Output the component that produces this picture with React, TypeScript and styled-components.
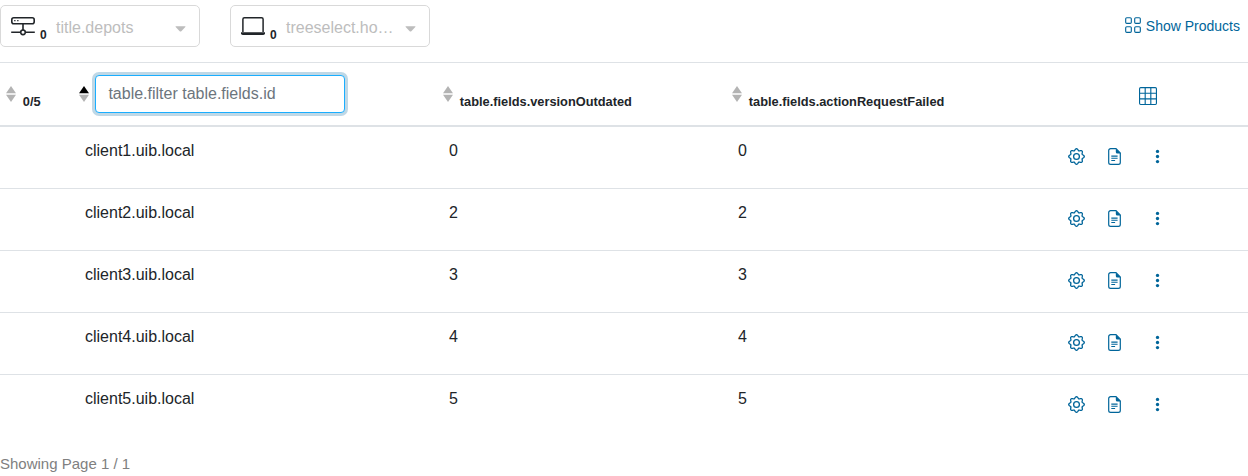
import React from 'react';
import styled, { createGlobalStyle } from 'styled-components';
import { BsGrid, BsGrid3X3 } from 'react-icons/bs';

const GlobalStyle = createGlobalStyle`
  * { box-sizing: border-box; }
  body {
    margin: 0;
    background: #fff;
    color: #212529;
    font: 16px/24px "Liberation Sans", Arial, sans-serif;
  }
`;

const Page = styled.main`
  width: 1248px;
  height: 476px;
  overflow: hidden;
`;

const Toolbar = styled.header`
  display: flex;
  align-items: flex-start;
  gap: 30px;
  height: 62px;
  padding: 5px 8px 0 0;
`;

const Select = styled.div`
  display: flex;
  align-items: center;
  width: 200px;
  height: 42px;
  padding: 0 13px 0 10px;
  border: 1px solid #d9d9d9;
  border-radius: 5px;
`;

const SelectIcon = styled.span`
  display: flex;
  width: 24px;
  height: 24px;
  margin-top: 2px;
`;

const Count = styled.span`
  width: 7px;
  margin: 17px 9px 0 5px;
  font-size: 12px;
  font-weight: 700;
`;

const SelectLabel = styled.span`
  flex: 1;
  padding-top: 3px;
  color: #bdbdbd;
`;

const Caret = styled.svg`
  width: 11px;
  height: 6px;
  margin-top: 5px;
  fill: #bdbdbd;
`;

const LinkButton = styled.button`
  display: flex;
  align-items: center;
  gap: 4px;
  margin: 9px 0 0 auto;
  padding: 0;
  border: 0;
  background: none;
  color: #00659a;
  font: 14px/24px "Liberation Sans", Arial, sans-serif;
  svg { margin-top: -2px; }
`;

const columns = '73px 364px 289px 330px 1fr';

const HeadRow = styled.div`
  display: grid;
  grid-template-columns: ${columns};
  height: 65px;
  border-top: 1px solid #dee2e6;
  border-bottom: 2px solid #dee2e6;
`;

const HeadCell = styled.div`
  display: flex;
  align-items: flex-start;
  padding: 12px 0 0 6px;
`;

const SortIcon = styled.svg`
  flex: none;
  width: 10px;
  height: 16px;
  margin-top: 11px;
`;

const HeadLabel = styled.span`
  margin: 15px 0 0 6.8px;
  font-size: 12.8px;
  font-weight: 700;
`;

const Filter = styled.input`
  width: 250px;
  height: 38px;
  margin-left: 6px;
  padding: 6px 12.4px;
  border: 1px solid #1aaeff;
  border-radius: 4px;
  outline: 0;
  box-shadow: 0 0 0 3px rgba(0, 101, 154, 0.25);
  color: #495057;
  font: inherit;
  &::placeholder { color: #6c757d; opacity: 1; }
`;

const TableButton = styled.div`
  padding: 24px 0 0 83px;
  color: #00659a;
  line-height: 0;
`;

const Row = styled.div`
  display: grid;
  grid-template-columns: ${columns};
  height: 62px;
  border-bottom: 1px solid #dee2e6;
  &:last-child { border-bottom: 0; }
`;

const Cell = styled.div`
  padding: 12px;
`;

const Actions = styled.div`
  display: flex;
  align-items: flex-start;
  padding: 21px 0 0 12px;
  color: #00659a;
`;

const ActionIcon = styled.span<{ $width: number }>`
  display: flex;
  width: ${(p) => p.$width}px;
`;

const Footer = styled.footer`
  padding-top: 15px;
  color: #808080;
  font-size: 15px;
`;

function Sort({ active = false }: { active?: boolean }) {
  return (
    <SortIcon viewBox="0 0 10 16">
      <path d="M0 7.2 5 0l5 7.2z" fill={active ? '#000' : '#b3b3b3'} />
      <path d="M0 8.8h10L5 16z" fill="#b3b3b3" />
    </SortIcon>
  );
}

function NetworkIcon() {
  return (
    <svg width="24" height="24" fill="none" stroke="currentColor" strokeWidth="1.6">
      <rect x="0.8" y="2.8" width="22.4" height="6" rx="2" />
      <path d="M12 9v6M0.2 17.3h9.2M14.6 17.3h9.2" />
      <circle cx="12" cy="17.3" r="2.3" />
      <path d="M3.2 5.7h1.3M6.2 5.7h1.3" strokeWidth="1.3" />
    </svg>
  );
}

function LaptopIcon() {
  return (
    <svg width="24" height="24" fill="none" stroke="currentColor" strokeWidth="1.5">
      <path d="M1.9 17V4.3a1.5 1.5 0 0 1 1.5-1.5h17.2a1.5 1.5 0 0 1 1.5 1.5V17" />
      <path d="M0 17.2h24v1a1.8 1.8 0 0 1-1.8 1.8H1.8A1.8 1.8 0 0 1 0 18.2z" fill="currentColor" stroke="none" />
    </svg>
  );
}

// Eight rounded teeth: the radius swings once per tooth.
const gearOutline = Array.from({ length: 96 }, (_, i) => {
  const angle = (i / 96) * Math.PI * 2;
  const radius = 6.95 + 0.85 * Math.cos(8 * angle);
  return `${(8.5 + radius * Math.cos(angle)).toFixed(2)},${(8.5 + radius * Math.sin(angle)).toFixed(2)}`;
}).join(' ');

function GearIcon() {
  return (
    <svg width="17" height="17" fill="none" stroke="currentColor" strokeWidth="1.3">
      <polygon points={gearOutline} strokeLinejoin="round" />
      <circle cx="8.5" cy="8.5" r="2.9" />
    </svg>
  );
}

function FileIcon() {
  return (
    <svg width="17" height="17" viewBox="0 0 17 17" fill="none" stroke="currentColor" strokeWidth="1.2">
      <path d="M10 .7H4.6a1.9 1.9 0 0 0-1.9 1.9v11.8a1.9 1.9 0 0 0 1.9 1.9h7.8a1.9 1.9 0 0 0 1.9-1.9V5z" />
      <path d="M9.8.5v3.4a1.5 1.5 0 0 0 1.5 1.5h3.3z" fill="currentColor" stroke="none" />
      <path d="M5.3 8.1h6.3M5.3 10.2h6.3M5.3 12.4h3.8" strokeWidth="1.05" />
    </svg>
  );
}

function DotsIcon() {
  return (
    <svg width="17" height="17" fill="currentColor">
      <circle cx="8.5" cy="3.4" r="1.65" />
      <circle cx="8.5" cy="8.5" r="1.65" />
      <circle cx="8.5" cy="13.6" r="1.65" />
    </svg>
  );
}

function DownCaret() {
  return (
    <Caret viewBox="0 0 11 6">
      <path d="M1 .3h9q1 0 .3.8L6.3 5.2q-.8.8-1.6 0L.7 1.1Q0 .3 1 .3z" />
    </Caret>
  );
}

const clients = [
  { id: 'client1.uib.local', outdated: 0, failed: 0 },
  { id: 'client2.uib.local', outdated: 2, failed: 2 },
  { id: 'client3.uib.local', outdated: 3, failed: 3 },
  { id: 'client4.uib.local', outdated: 4, failed: 4 },
  { id: 'client5.uib.local', outdated: 5, failed: 5 },
];

export default function App() {
  return (
    <>
      <GlobalStyle />
      <Page>
        <Toolbar>
          <Select>
            <SelectIcon><NetworkIcon /></SelectIcon>
            <Count>0</Count>
            <SelectLabel>title.depots</SelectLabel>
            <DownCaret />
          </Select>
          <Select>
            <SelectIcon><LaptopIcon /></SelectIcon>
            <Count>0</Count>
            <SelectLabel>treeselect.ho…</SelectLabel>
            <DownCaret />
          </Select>
          <LinkButton><BsGrid size={18} />Show Products</LinkButton>
        </Toolbar>
        <section>
          <HeadRow>
            <HeadCell><Sort /><HeadLabel>0/5</HeadLabel></HeadCell>
            <HeadCell><Sort active /><Filter placeholder="table.filter table.fields.id" /></HeadCell>
            <HeadCell><Sort /><HeadLabel>table.fields.versionOutdated</HeadLabel></HeadCell>
            <HeadCell><Sort /><HeadLabel>table.fields.actionRequestFailed</HeadLabel></HeadCell>
            <TableButton><BsGrid3X3 size={18} /></TableButton>
          </HeadRow>
          {clients.map((c) => (
            <Row key={c.id}>
              <Cell />
              <Cell>{c.id}</Cell>
              <Cell>{c.outdated}</Cell>
              <Cell>{c.failed}</Cell>
              <Actions>
                <ActionIcon $width={38}><GearIcon /></ActionIcon>
                <ActionIcon $width={43}><FileIcon /></ActionIcon>
                <ActionIcon $width={17}><DotsIcon /></ActionIcon>
              </Actions>
            </Row>
          ))}
        </section>
        <Footer>Showing Page 1 / 1</Footer>
      </Page>
    </>
  );
}
